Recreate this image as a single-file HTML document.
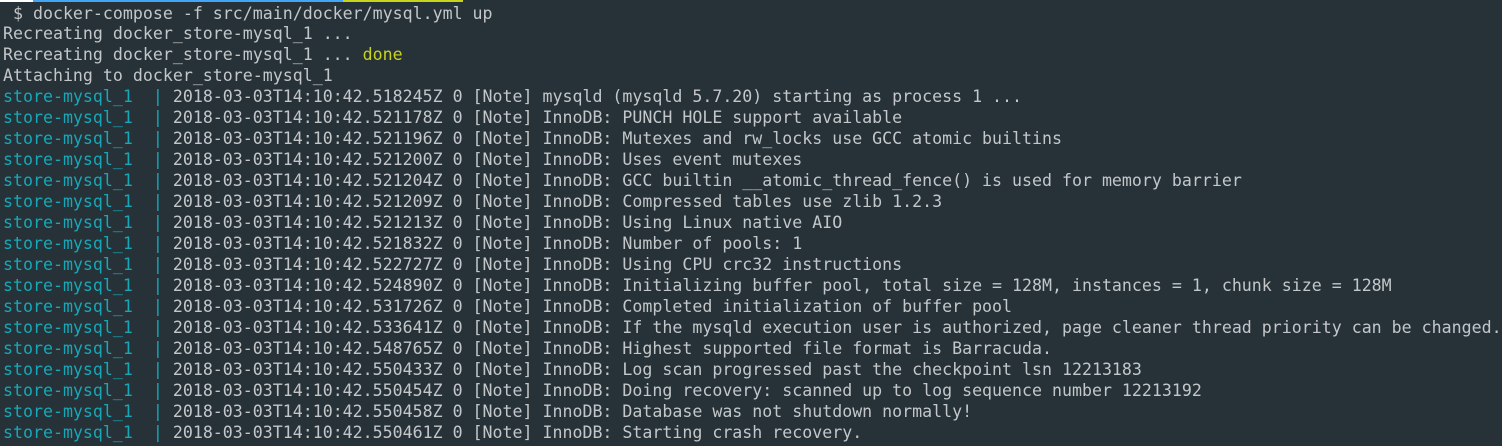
<!DOCTYPE html>
<html><head><style>
html,body{margin:0;padding:0;width:1502px;height:446px;overflow:hidden;background:#263238}
.bar{position:absolute;top:0;height:2px}
pre{position:absolute;left:3px;top:3.5px;margin:0;font-family:"DejaVu Sans Mono","Liberation Mono",monospace;font-size:16.6px;line-height:20.97px;color:#c3c7c9}
.c{color:#16a8b8}.y{color:#c8d31c}
</style></head><body>
<div class="bar" style="left:0;width:33px;background:#fff"></div>
<div class="bar" style="left:33px;width:310px;background:#42a5f5"></div>
<div class="bar" style="left:343px;width:120px;background:#c8d31c"></div>
<pre> $ docker-compose -f src/main/docker/mysql.yml up
Recreating docker_store-mysql_1 ...
Recreating docker_store-mysql_1 ... <span class="y">done</span>
Attaching to docker_store-mysql_1
<span class="c">store-mysql_1  |</span> 2018-03-03T14:10:42.518245Z 0 [Note] mysqld (mysqld 5.7.20) starting as process 1 ...
<span class="c">store-mysql_1  |</span> 2018-03-03T14:10:42.521178Z 0 [Note] InnoDB: PUNCH HOLE support available
<span class="c">store-mysql_1  |</span> 2018-03-03T14:10:42.521196Z 0 [Note] InnoDB: Mutexes and rw_locks use GCC atomic builtins
<span class="c">store-mysql_1  |</span> 2018-03-03T14:10:42.521200Z 0 [Note] InnoDB: Uses event mutexes
<span class="c">store-mysql_1  |</span> 2018-03-03T14:10:42.521204Z 0 [Note] InnoDB: GCC builtin __atomic_thread_fence() is used for memory barrier
<span class="c">store-mysql_1  |</span> 2018-03-03T14:10:42.521209Z 0 [Note] InnoDB: Compressed tables use zlib 1.2.3
<span class="c">store-mysql_1  |</span> 2018-03-03T14:10:42.521213Z 0 [Note] InnoDB: Using Linux native AIO
<span class="c">store-mysql_1  |</span> 2018-03-03T14:10:42.521832Z 0 [Note] InnoDB: Number of pools: 1
<span class="c">store-mysql_1  |</span> 2018-03-03T14:10:42.522727Z 0 [Note] InnoDB: Using CPU crc32 instructions
<span class="c">store-mysql_1  |</span> 2018-03-03T14:10:42.524890Z 0 [Note] InnoDB: Initializing buffer pool, total size = 128M, instances = 1, chunk size = 128M
<span class="c">store-mysql_1  |</span> 2018-03-03T14:10:42.531726Z 0 [Note] InnoDB: Completed initialization of buffer pool
<span class="c">store-mysql_1  |</span> 2018-03-03T14:10:42.533641Z 0 [Note] InnoDB: If the mysqld execution user is authorized, page cleaner thread priority can be changed.
<span class="c">store-mysql_1  |</span> 2018-03-03T14:10:42.548765Z 0 [Note] InnoDB: Highest supported file format is Barracuda.
<span class="c">store-mysql_1  |</span> 2018-03-03T14:10:42.550433Z 0 [Note] InnoDB: Log scan progressed past the checkpoint lsn 12213183
<span class="c">store-mysql_1  |</span> 2018-03-03T14:10:42.550454Z 0 [Note] InnoDB: Doing recovery: scanned up to log sequence number 12213192
<span class="c">store-mysql_1  |</span> 2018-03-03T14:10:42.550458Z 0 [Note] InnoDB: Database was not shutdown normally!
<span class="c">store-mysql_1  |</span> 2018-03-03T14:10:42.550461Z 0 [Note] InnoDB: Starting crash recovery.</pre>
</body></html>
